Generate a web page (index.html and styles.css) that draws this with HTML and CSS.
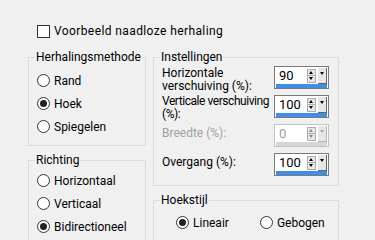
FILE: index.html
```html
<!DOCTYPE html>
<html lang="nl">
<head>
<meta charset="UTF-8">
<title>Naadloze herhaling</title>
<link rel="stylesheet" href="styles.css">
</head>
<body>

<div class="dialog">
    <label class="check"><span class="box"></span>Voorbeeld naadloze herhaling</label>

    <div class="columns">
        <div class="col col-left">
            <fieldset class="group method">
                <legend>Herhalingsmethode</legend>
                <div class="inner">
                    <div class="radio"><span class="circle"></span>Rand</div>
                    <div class="radio"><span class="circle on"></span>Hoek</div>
                    <div class="radio"><span class="circle"></span>Spiegelen</div>
                </div>
            </fieldset>

            <fieldset class="group direction">
                <legend>Richting</legend>
                <div class="inner">
                    <div class="radio"><span class="circle"></span>Horizontaal</div>
                    <div class="radio"><span class="circle"></span>Verticaal</div>
                    <div class="radio"><span class="circle on"></span>Bidirectioneel</div>
                </div>
            </fieldset>
        </div>

        <div class="col col-right">
            <fieldset class="group settings">
                <legend>Instellingen</legend>
                <div class="inner">
                    <div class="field">
                        <span class="label two">Horizontale<br>verschuiving (%):</span>
                        <div class="spin">
                            <div class="spin-row">
                                <span class="value">90</span>
                                <span class="arrows"><span class="up"></span><span class="down"></span></span>
                                <span class="drop"></span>
                            </div>
                            <div class="bar"></div>
                        </div>
                    </div>
                    <div class="field">
                        <span class="label two first-tight">Verticale verschuiving<br>(%):</span>
                        <div class="spin">
                            <div class="spin-row">
                                <span class="value">100</span>
                                <span class="arrows"><span class="up"></span><span class="down"></span></span>
                                <span class="drop"></span>
                            </div>
                            <div class="bar"></div>
                        </div>
                    </div>
                    <div class="field disabled">
                        <span class="label">Breedte (%):</span>
                        <div class="spin">
                            <div class="spin-row">
                                <span class="value">0</span>
                                <span class="arrows"><span class="up"></span><span class="down"></span></span>
                                <span class="drop"></span>
                            </div>
                            <div class="bar"></div>
                        </div>
                    </div>
                    <div class="field">
                        <span class="label">Overgang (%):</span>
                        <div class="spin">
                            <div class="spin-row">
                                <span class="value">100</span>
                                <span class="arrows"><span class="up"></span><span class="down"></span></span>
                                <span class="drop"></span>
                            </div>
                            <div class="bar"></div>
                        </div>
                    </div>
                </div>
            </fieldset>

            <fieldset class="group corner">
                <legend>Hoekstijl</legend>
                <div class="inner">
                    <div class="radio"><span class="circle on"></span>Lineair</div>
                    <div class="radio"><span class="circle"></span>Gebogen</div>
                </div>
            </fieldset>
        </div>
    </div>
</div>

</body>
</html>
```

FILE: styles.css
```css
body {
    margin: 0;
    padding: 0;
    background-color: #f0f0f0;
    font-family: Roboto, "Noto Sans", sans-serif;
    font-size: 12px;
    color: #000;
    overflow: hidden;
}

.dialog {
    padding: 23px 0 0 28px;
}

.check {
    display: flex;
    align-items: center;
    height: 16px;
    padding-left: 9px;
    line-height: 16px;
    letter-spacing: 0.4px;
}

.box {
    width: 11px;
    height: 11px;
    border: 1px solid #333;
    background-color: #fff;
    margin-right: 4px;
}

.columns {
    display: flex;
    gap: 7px;
    margin-top: 10px;
}

.col {
    display: flex;
    flex-direction: column;
}

.col-left {
    width: 118px;
    gap: 6px;
}

.col-right {
    width: 186px;
    gap: 6px;
}

.group {
    margin: 0;
    padding: 0;
    border: 1px solid #dcdcdc;
    min-width: 0;
}

.group legend {
    margin-left: 6px;
    padding: 0 1px;
    line-height: 16px;
}

.method .inner {
    padding: 4px 0 7px 8px;
}

.direction {
    height: 120px;
}

.direction .inner {
    padding: 1px 0 0 8px;
}

.radio {
    display: flex;
    align-items: center;
    height: 23px;
}

.circle {
    position: relative;
    width: 11px;
    height: 11px;
    border: 1px solid #333;
    border-radius: 50%;
    background-color: #fff;
    margin-right: 4px;
}

.circle.on::after {
    content: '';
    position: absolute;
    left: 2px;
    top: 2px;
    width: 7px;
    height: 7px;
    border-radius: 50%;
    background-color: #222;
}

.settings .inner {
    display: flex;
    flex-direction: column;
    gap: 6px;
    padding: 1px 0 9px 8px;
}

.field {
    display: flex;
    align-items: flex-start;
    justify-content: space-between;
    height: 23px;
    padding-right: 9px;
}

.label {
    line-height: 13px;
    margin-top: 3px;
    white-space: nowrap;
}

.label.two {
    margin-top: 1px;
}

.label.first-tight {
    margin-top: 0;
    letter-spacing: -0.45px;
}

.spin {
    flex: none;
    width: 53px;
    height: 21px;
    border: 1px solid #7a7a7a;
    background-color: #fff;
    display: flex;
    flex-direction: column;
}

.spin-row {
    display: flex;
    align-items: flex-start;
    height: 17px;
}

.value {
    flex: 1;
    padding-left: 4px;
    font-size: 13px;
    line-height: 17px;
}

.arrows {
    display: flex;
    flex-direction: column;
    margin-top: 2px;
    margin-right: 2px;
}

.up,
.down {
    position: relative;
    width: 7px;
    height: 5px;
    border: 1px solid #adadad;
    background-color: #e8e8e8;
}

.down {
    border-top: none;
    height: 6px;
}

.up::after,
.down::after {
    content: '';
    position: absolute;
    left: 1px;
    border-left: 2.5px solid transparent;
    border-right: 2.5px solid transparent;
}

.up::after {
    top: 1px;
    border-bottom: 3px solid #000;
}

.down::after {
    top: 1px;
    border-top: 3px solid #000;
}

.drop {
    position: relative;
    width: 8px;
    height: 15px;
    margin-top: 1px;
    margin-right: 1px;
    background-color: #e6e6e6;
    border-right: 1px solid #646464;
    border-bottom: 1px solid #646464;
}

.drop::after {
    content: '';
    position: absolute;
    left: 2px;
    top: 4px;
    border-left: 2px solid transparent;
    border-right: 2px solid transparent;
    border-top: 3px solid #000;
}

.bar {
    height: 4px;
    background-color: #3c8ee6;
    margin: 0 1px;
}

.disabled .label,
.disabled .value {
    color: #a0a0a0;
}

.disabled .spin {
    border-color: #c3c3c3;
}

.disabled .up::after,
.disabled .down::after {
    border-bottom-color: #888;
    border-top-color: #888;
}

.disabled .drop::after {
    border-top-color: #aaa;
}

.disabled .drop {
    border-color: #b5b5b5;
}

.disabled .bar {
    background-color: #d6d6d6;
}

.corner {
    height: 60px;
}

.corner .inner {
    display: flex;
    padding: 3px 0 0 22px;
    gap: 31px;
}
```
